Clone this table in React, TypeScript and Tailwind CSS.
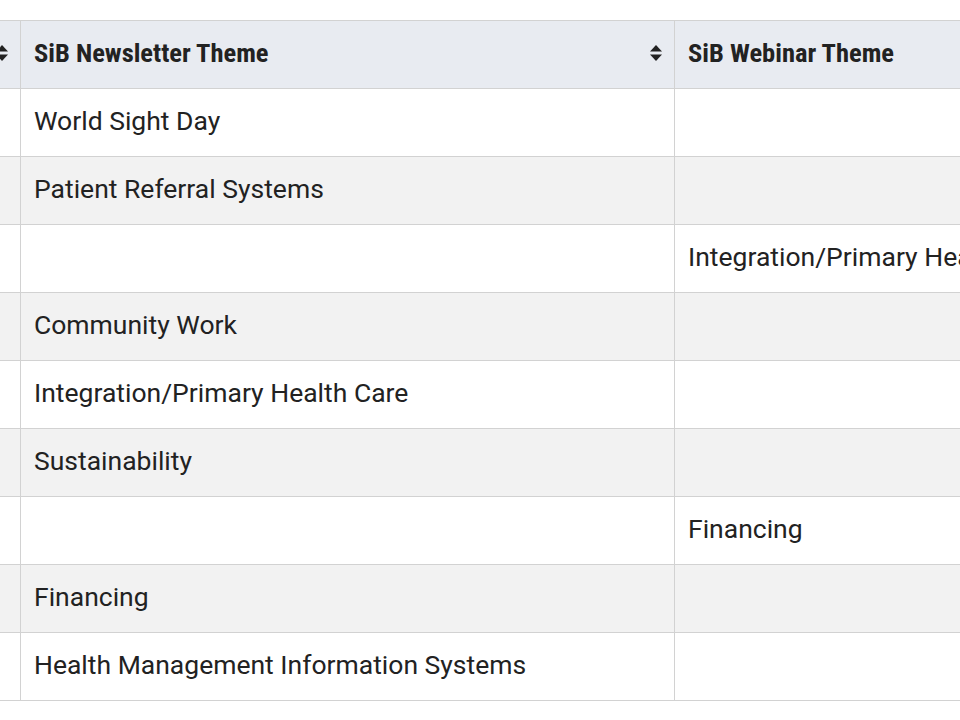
const rows: [string, string][] = [
  ["World Sight Day", ""],
  ["Patient Referral Systems", ""],
  ["", "Integration/Primary Health Care"],
  ["Community Work", ""],
  ["Integration/Primary Health Care", ""],
  ["Sustainability", ""],
  ["", "Financing"],
  ["Financing", ""],
  ["Health Management Information Systems", ""],
]

function SortIcon() {
  return (
    <svg width="14" height="18" viewBox="0 0 14 18" className="shrink-0">
      <path d="M7 1 L13 7.5 H1 Z" fill="#222" />
      <path d="M7 17 L13 10.5 H1 Z" fill="#222" />
    </svg>
  )
}

export default function App() {
  return (
    <div className="w-[960px] h-[720px] overflow-hidden bg-white pt-5" style={{ fontFamily: "Roboto, 'Liberation Sans', sans-serif" }}>
      <table className="-ml-[101px] w-[1175px] table-fixed border-collapse text-[26.5px] text-[#222]">
        <colgroup>
          <col className="w-[121px]" />
          <col className="w-[654px]" />
          <col className="w-[400px]" />
        </colgroup>
        <thead>
          <tr className="h-[68px] bg-[#e8ebf1]">
            {["", "SiB Newsletter Theme", "SiB Webinar Theme"].map((h, i) => (
              <th key={i} className="border border-[#d2d2d2] pl-[13px] pr-[11px] pb-[4px] text-left align-middle">
                <div className="flex items-center justify-between">
                  <span className="font-bold" style={{ fontStretch: "condensed", fontFamily: "'Roboto Condensed', Roboto, sans-serif" }}>{h}</span>
                  {i < 2 && <SortIcon />}
                </div>
              </th>
            ))}
          </tr>
        </thead>
        <tbody>
          {rows.map((r, i) => (
            <tr key={i} className={i % 2 === 1 ? "h-[68px] bg-[#f2f2f2]" : "h-[68px] bg-white"}>
              <td className="border border-[#d2d2d2] px-[13px] pb-[3px]"></td>
              <td className="border border-[#d2d2d2] px-[13px] pb-[3px] whitespace-nowrap">{r[0]}</td>
              <td className="border border-[#d2d2d2] px-[13px] pb-[3px] whitespace-nowrap overflow-hidden">{r[1]}</td>
            </tr>
          ))}
        </tbody>
      </table>
    </div>
  )
}
